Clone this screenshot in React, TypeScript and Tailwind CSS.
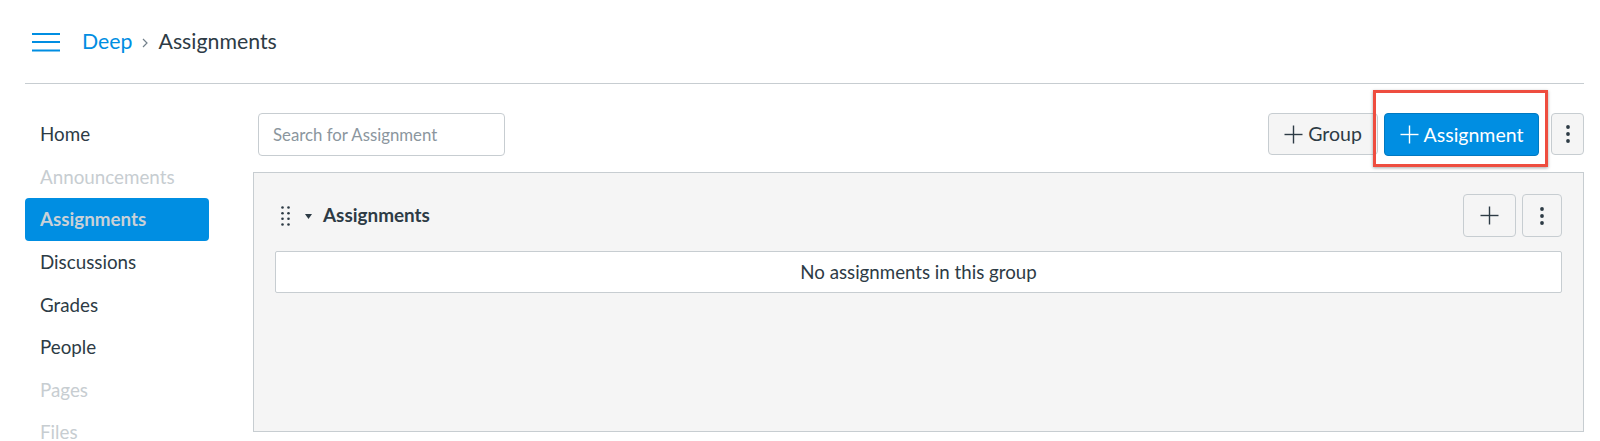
import React from "react";

const navItems = [
  { label: "Home", state: "normal" },
  { label: "Announcements", state: "muted" },
  { label: "Assignments", state: "active" },
  { label: "Discussions", state: "normal" },
  { label: "Grades", state: "normal" },
  { label: "People", state: "normal" },
  { label: "Pages", state: "muted" },
  { label: "Files", state: "muted" },
];

function PlusIcon({ color = "#2d3b45", size = 19 }: { color?: string; size?: number }) {
  return (
    <svg width={size} height={size} viewBox="0 0 19 19" fill="none">
      <line x1="9.5" y1="0.5" x2="9.5" y2="18.5" stroke={color} strokeWidth="1.4" />
      <line x1="0.5" y1="9.5" x2="18.5" y2="9.5" stroke={color} strokeWidth="1.4" />
    </svg>
  );
}

function KebabIcon() {
  return (
    <svg width="4" height="18" viewBox="0 0 4 18" fill="#2d3b45">
      <circle cx="2" cy="2" r="1.9" />
      <circle cx="2" cy="9" r="1.9" />
      <circle cx="2" cy="16" r="1.9" />
    </svg>
  );
}

function DragHandle() {
  return (
    <svg width="9" height="20" viewBox="0 0 9 20" fill="#2d3b45">
      {[1.5, 7.2, 12.8, 18.5].map((y) => (
        <React.Fragment key={y}>
          <circle cx="1.5" cy={y} r="1.3" />
          <circle cx="7.5" cy={y} r="1.3" />
        </React.Fragment>
      ))}
    </svg>
  );
}

export default function App() {
  return (
    <div
      className="w-[1600px] h-[441px] overflow-hidden bg-white pl-[25px] pr-[16px] text-[#2d3b45]"
      style={{ fontFamily: "Lato, 'Open Sans', sans-serif" }}
    >
      {/* breadcrumb header */}
      <div className="flex items-center h-[84px] border-b border-[#c7cdd1]">
        <svg width="28" height="19" viewBox="0 0 28 19" className="ml-[7px] mt-[1px]">
          <rect x="0" y="0" width="28" height="2" fill="#008ee2" />
          <rect x="0" y="8" width="28" height="2" fill="#008ee2" />
          <rect x="0" y="16.5" width="28" height="2" fill="#008ee2" />
        </svg>
        <span className="ml-[22px] text-[21.3px] text-[#008ee2]">Deep</span>
        <svg width="6" height="10" viewBox="0 0 6 10" className="ml-[10px] mt-[3px]" fill="none">
          <path d="M1 1l4 4-4 4" stroke="#73818c" strokeWidth="1.2" />
        </svg>
        <span className="ml-[10px] text-[21.3px] text-[#2d3b45]">Assignments</span>
      </div>

      <div className="flex">
        {/* course nav */}
        <nav className="w-[184px] pt-[29px] flex flex-col">
          {navItems.map((item) => (
            <div
              key={item.label}
              className={
                item.state === "active"
                  ? "h-[42.6px] flex items-center pl-[15px] rounded-[4px] bg-[#008ee2] text-[#c9d1d7] font-bold text-[18.8px]"
                  : item.state === "muted"
                  ? "h-[42.6px] flex items-center pl-[15px] text-[#c7cdd1] text-[18.8px]"
                  : "h-[42.6px] flex items-center pl-[15px] text-[#2d3b45] text-[18.8px]"
              }
            >
              {item.label}
            </div>
          ))}
        </nav>

        <main className="ml-[44px] flex-1 pt-[29px]">
          {/* toolbar */}
          <div className="flex items-start">
            <div className="ml-[5px] w-[247px] h-[43px] rounded-[4px] border border-[#c7cdd1] flex items-center pl-[14px] text-[16.8px] text-[#8b969e]">
              Search for Assignment
            </div>
            <div className="ml-auto flex items-start">
              <button className="w-[110px] h-[42px] rounded-[4px] border border-[#c7cdd1] bg-[#f5f5f5] flex items-center justify-center gap-[5px] text-[19.5px] text-[#2d3b45]">
                <PlusIcon />
                Group
              </button>
              <div className="relative ml-[6px]">
                <div className="absolute left-[-11px] right-[-9px] top-[-23px] bottom-[-11px] border-[3px] border-[#ee4d3f] shadow-[0_1px_3px_rgba(0,0,0,0.35)]" />
                <button className="relative w-[155px] h-[43px] rounded-[4px] bg-[#008ee2] border border-[#0079c1] flex items-center justify-center gap-[5px] text-[19.5px] text-white">
                  <PlusIcon color="#ffffff" />
                  Assignment
                </button>
              </div>
              <button className="ml-[12px] w-[33px] h-[42px] rounded-[4px] border border-[#c7cdd1] bg-[#f5f5f5] flex items-center justify-center">
                <KebabIcon />
              </button>
            </div>
          </div>

          {/* assignment group panel */}
          <div className="mt-[16px] h-[260px] bg-[#f5f5f5] border border-[#c7cdd1] px-[21px] pt-[21px]">
            <div className="flex items-center h-[43px]">
              <span className="ml-[6px] flex">
                <DragHandle />
              </span>
              <svg width="7" height="5" viewBox="0 0 7 5" className="ml-[15px] mt-[1px]" fill="#2d3b45">
                <path d="M0 0h7L3.5 5z" />
              </svg>
              <span className="ml-[11px] text-[18.9px] font-bold text-[#2d3b45]">Assignments</span>
              <div className="ml-auto flex gap-[6px]">
                <button className="w-[53px] h-[43px] rounded-[4px] border border-[#c7cdd1] bg-[#f5f5f5] flex items-center justify-center">
                  <PlusIcon />
                </button>
                <button className="w-[40px] h-[43px] rounded-[4px] border border-[#c7cdd1] bg-[#f5f5f5] flex items-center justify-center">
                  <KebabIcon />
                </button>
              </div>
            </div>
            <div className="mt-[14px] h-[42px] bg-white border border-[#c7cdd1] rounded-[2px] flex items-center justify-center text-[18.7px] text-[#2d3b45]">
              No assignments in this group
            </div>
          </div>
        </main>
      </div>
    </div>
  );
}
